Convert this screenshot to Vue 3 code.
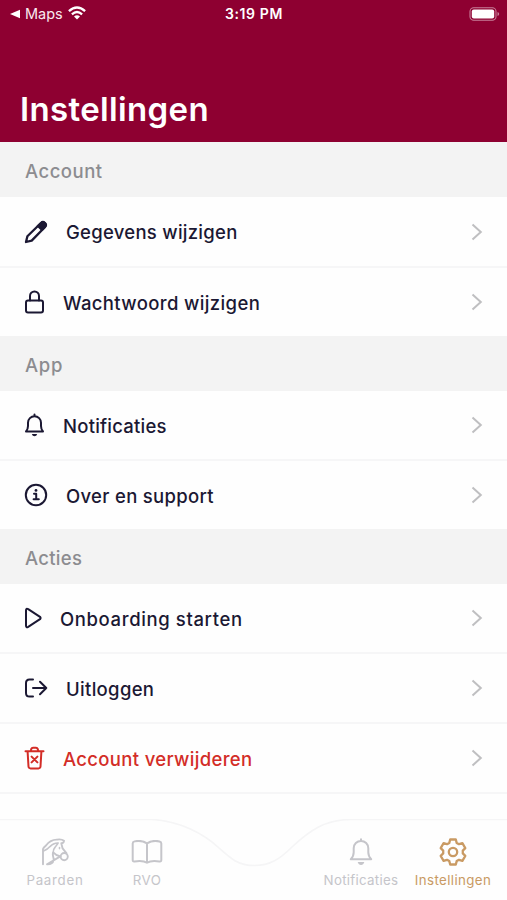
<script setup>
import { h } from 'vue'

const sections = [
  {
    title: 'Account', spacing: 0.5,
    rows: [
      { icon: 'pencil', label: 'Gegevens wijzigen', spacing: 0.27, height: 71 },
      { icon: 'lock', label: 'Wachtwoord wijzigen', spacing: 0.37, height: 68 },
    ],
  },
  {
    title: 'App', spacing: 0.75,
    rows: [
      { icon: 'bell', label: 'Notificaties', spacing: 0.23, height: 70 },
      { icon: 'info', label: 'Over en support', spacing: 0.31, height: 68 },
    ],
  },
  {
    title: 'Acties', spacing: 0.3,
    rows: [
      { icon: 'play', label: 'Onboarding starten', spacing: 0.62, height: 70 },
      { icon: 'logout', label: 'Uitloggen', spacing: 0.32, height: 70 },
      { icon: 'trash', label: 'Account verwijderen', spacing: 0.33, height: 70, danger: true },
    ],
  },
]

const tabs = [
  { icon: 'horse', label: 'Paarden', spacing: 0.75 },
  { icon: 'book', label: 'RVO', spacing: 0.5 },
  null,
  { icon: 'tabBell', label: 'Notificaties', spacing: 0.3 },
  { icon: 'gear', label: 'Instellingen', spacing: 0.4, active: true },
]

const p = (d, extra = {}) => h('path', { d, ...extra })
const solid = { fill: 'currentColor' }
const icons = {
  pencil: [24, 24, () => [
    p('M2 22 L3.4 16.3 L17 3 Q18.9 1.2 20.6 2.8 L21.2 3.4 Q22.8 5.1 21 7 L7.7 20.6 Z', { 'stroke-width': 2.3 }),
    p('M13.8 6 L17 3 Q18.9 1.2 20.6 2.8 L21.2 3.4 Q22.8 5.1 21 7 L18 10 Z', solid),
  ]],
  lock: [21, 24, () => [
    h('rect', { x: 2, y: 10.5, width: 17, height: 12, rx: 2 }),
    p('M6 10.5 V6 a4.5 4.5 0 0 1 9 0 V10.5'),
  ]],
  bell: [21, 24, () => [
    p('M10.5 1.5 V3 M2 18.5 H19 C17.5 16.8 17 15.5 17 13 V9.7 a6.5 6.5 0 0 0 -13 0 V13 C4 15.5 3.5 16.8 2 18.5 Z'),
    p('M7.8 21 H13.2 Q12.5 23.2 10.5 23.2 Q8.5 23.2 7.8 21 Z', { fill: 'currentColor', stroke: 'none' }),
  ]],
  info: [24, 24, () => [
    h('circle', { cx: 12, cy: 12, r: 10.2 }),
    p('M10 10.7 H12.2 V16 M9.6 16.2 H14.8'),
    h('circle', { cx: 12, cy: 7.4, r: 1.4, fill: 'currentColor', stroke: 'none' }),
  ]],
  play: [18, 24, () => [
    p('M2 4.4 V19.6 Q2 22 4.2 20.8 L16 13.2 Q17.2 12 16 10.8 L4.2 3.2 Q2 2 2 4.4 Z'),
  ]],
  logout: [24, 24, () => [
    p('M9 3.4 H5.5 Q2 3.4 2 7 V17 Q2 20.6 5.5 20.6 H9 M9 12 H22.3 M16 5.8 L22.3 12 L16 18.2'),
  ]],
  trash: [21, 24, () => [
    p('M1.5 5.3 H19.5 M6.8 5 L7.3 2.8 Q7.7 1.7 9 1.7 H12 Q13.3 1.7 13.7 2.8 L14.2 5 M3.6 5.5 L4.5 20.5 Q4.7 22.4 6.6 22.4 H14.4 Q16.3 22.4 16.5 20.5 L17.4 5.5 M7.6 10.6 L13.4 16.4 M13.4 10.6 L7.6 16.4'),
  ]],
  horse: [28, 28, () => [
    p('M2 26.2 V11 Q2.5 9.5 5 7.5 C8 3.5 12 1.5 16 1.6 Q20.5 .8 23 2.8 Q22.6 5.2 20.3 5.2 L21.6 10.4 L25.4 15.2 M19.4 18.4 Q15 17.6 12.2 14.4 C10.8 17.5 13.2 19.5 12.6 22.2 Q11.6 26.4 6 26.2 Z', { 'stroke-width': 1.9 }),
    h('circle', { cx: 23.2, cy: 18.6, r: 3.6, 'stroke-width': 1.9 }),
    p('M2.5 13 Q6.5 11.6 9 8.6 Q12 5.2 17.2 5 M12.2 14.4 Q12 11.6 14 9.4 L17 5.2 M18.5 9.6 V10.6', { 'stroke-width': 1.6 }),
  ]],
  book: [32, 24, () => [
    p('M16 3.4 C12 .8 6.5 .7 3.5 1.4 Q1.7 1.8 1.7 3.5 V20 Q1.7 21.8 3.5 21.4 C8 20.6 13 20.7 16 22.8 C19 20.7 24 20.6 28.5 21.4 Q30.3 21.8 30.3 20 V3.5 Q30.3 1.8 28.5 1.4 C25.5 .7 20 .8 16 3.4 Z M16 3.4 V22.8'),
  ]],
  tabBell: [24, 28, () => [
    p('M12 1.2 V3 M1.8 21.3 H22.2 C20.2 19.3 19.3 17 19.3 14.3 V10.2 a7.3 7.3 0 0 0 -14.6 0 V14.3 C4.7 17 3.8 19.3 1.8 21.3 Z'),
    p('M8.7 24 H15.3 Q14.5 27 12 27 Q9.5 27 8.7 24 Z', { fill: 'currentColor', stroke: 'none' }),
  ]],
  gear: [28, 28, () => [
    p('M11.2 1.5 H16.8 L17.7 4.9 L20 6.2 L23.4 5.2 L26.3 10.1 L23.8 12.6 V15.4 L26.3 17.9 L23.4 22.8 L20 21.8 L17.7 23.1 L16.8 26.5 H11.2 L10.3 23.1 L8 21.8 L4.6 22.8 L1.7 17.9 L4.2 15.4 V12.6 L1.7 10.1 L4.6 5.2 L8 6.2 L10.3 4.9 Z', { 'stroke-width': 2.3 }),
    h('circle', { cx: 14, cy: 14, r: 4.2, 'stroke-width': 2.3 }),
  ]],
}

const Icon = (props) => {
  const [w, ht, draw] = icons[props.name]
  return h('svg', {
    width: w, height: ht, viewBox: `0 0 ${w} ${ht}`, fill: 'none', stroke: 'currentColor',
    'stroke-width': 2, 'stroke-linecap': 'round', 'stroke-linejoin': 'round',
  }, draw())
}
Icon.props = ['name']
</script>

<template>
  <div class="screen">
    <header class="header">
      <div class="status">
        <div class="back">
          <svg width="10" height="10" viewBox="0 0 10 10"><path d="M0 5 L10 .7 V9.3 Z" fill="#fff" /></svg>
          <span>Maps</span>
          <svg class="wifi" width="18" height="14" viewBox="0 0 18 14" fill="none" stroke="#fff" stroke-width="2.3">
            <path d="M.9 5.2 Q9 -2.2 17.1 5.2 M3.9 8.3 Q9 3.7 14.1 8.3" />
            <path d="M6 10.4 Q9 7.9 12 10.4 L9 13.5 Z" fill="#fff" stroke="none" />
          </svg>
        </div>
        <span class="time">3:19 PM</span>
        <svg class="battery" width="31" height="14" viewBox="0 0 31 14">
          <rect x="1" y=".8" width="26" height="12.4" rx="3.7" fill="none" stroke="#c77f99" stroke-width="1.1" />
          <rect x="2.8" y="2.6" width="22.4" height="8.8" rx="2" fill="#fff" />
          <path d="M28.5 5 Q30.2 5.4 30.2 7 Q30.2 8.6 28.5 9 Z" fill="#c77f99" />
        </svg>
      </div>
      <h1 class="title">Instellingen</h1>
    </header>

    <main class="content">
      <section v-for="s in sections" :key="s.title">
        <h2 class="band" :style="{ letterSpacing: s.spacing + 'px' }">{{ s.title }}</h2>
        <div v-for="r in s.rows" :key="r.label" class="row" :class="{ danger: r.danger }" :style="{ height: r.height + 'px' }">
          <Icon :name="r.icon" />
          <span class="label" :style="{ letterSpacing: r.spacing + 'px' }">{{ r.label }}</span>
          <svg class="chevron" width="12" height="18" viewBox="0 0 12 18" fill="none" stroke="#bfbfc1" stroke-width="2">
            <path d="M1.5 1.5 L9.8 9 L1.5 16.5" />
          </svg>
        </div>
      </section>
    </main>

    <nav class="tabbar">
      <svg class="curve" width="507" height="81" viewBox="0 0 507 81" fill="none">
        <path d="M0 .5 H152 C180 2 204 15 219 29 C230 39 238 46.5 254.500 46.500 C270 46.500 280 40 292 28 C309 12 325 .5 351 .5 H507" stroke="#f5f5f6" stroke-width="1.7" />
      </svg>
      <div v-for="(t, i) in tabs" :key="i" class="tab" :class="{ active: t && t.active }">
        <template v-if="t">
          <div class="glyph"><Icon :name="t.icon" /></div>
          <span :style="{ letterSpacing: t.spacing + 'px' }">{{ t.label }}</span>
        </template>
      </div>
    </nav>
  </div>
</template>

<style>
body { margin: 0; background: #fff; }
</style>

<style scoped>
.screen {
  width: 507px;
  height: 900px;
  display: flex;
  flex-direction: column;
  overflow: hidden;
  background: #fefefe;
  font-family: Inter, "Liberation Sans", sans-serif;
  color: #1b1833;
}
.header {
  height: 142px;
  box-sizing: border-box;
  background: #8e0031;
  color: #fff;
  display: flex;
  flex-direction: column;
  justify-content: space-between;
  flex: none;
}
.status {
  height: 27px;
  padding: 0 7px 0 10px;
  display: grid;
  grid-template-columns: 1fr auto 1fr;
  align-items: center;
  font-size: 14.5px;
}
.back { display: flex; align-items: center; gap: 5px; color: #f9e9ef; }
.wifi { margin-top: -2px; }
.time { font-weight: 600; font-size: 14px; letter-spacing: 0.6px; margin-right: 2px; }
.battery { justify-self: end; }
.title {
  margin: 0;
  padding: 0 0 13px 20px;
  font-size: 33px;
  line-height: 40px;
  font-weight: 600;
  letter-spacing: 0.35px;
}
.content { flex: 1; min-height: 0; }
.band {
  height: 55px;
  margin: 0;
  padding: 3px 25px 0;
  box-sizing: border-box;
  display: flex;
  align-items: center;
  background: #f3f3f3;
  color: #8c8c90;
  font-size: 18.5px;
  font-weight: 500;
}
.row {
  box-sizing: border-box;
  display: flex;
  align-items: center;
  padding: 0 24px;
  gap: 18px;
  border-bottom: 2px solid #f6f6f7;
  font-size: 18.5px;
  font-weight: 500;
}
.row:last-child:not(.danger) { border-bottom: 0; }
.label { flex: 1; white-space: nowrap; padding-top: 1px; }
.danger { color: #d32d27; }
.tabbar {
  position: relative;
  flex: none;
  height: 81px;
  padding: 0 8px 0 9px;
  box-sizing: border-box;
  background: #fefefe;
  display: grid;
  grid-template-columns: 92px 92px 1fr 92px 92px;
}
.curve { position: absolute; left: 0; top: 0; }
.tab {
  display: flex;
  flex-direction: column;
  align-items: center;
  padding-top: 17px;
  color: #c5c5ca;
  font-size: 13.3px;
  white-space: nowrap;
}
.glyph { height: 32px; display: flex; align-items: center; }
.tab span { margin-top: 4px; line-height: 16px; }
.active { color: #c99a63; }
</style>
